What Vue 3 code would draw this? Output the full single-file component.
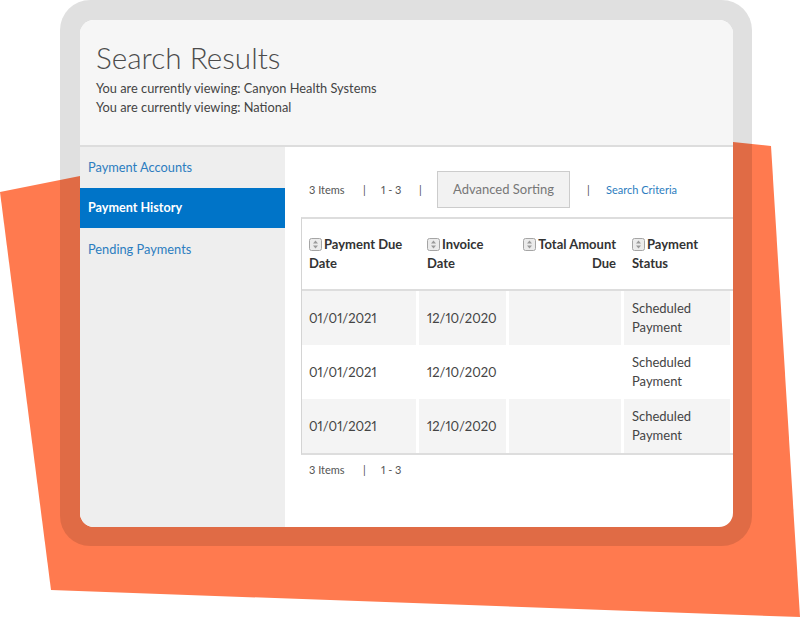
<script setup>
const nav = [
  { label: 'Payment Accounts', active: false },
  { label: 'Payment History', active: true },
  { label: 'Pending Payments', active: false },
]
const columns = [
  { first: 'Payment Due', second: 'Date', right: false },
  { first: 'Invoice', second: 'Date', right: false },
  { first: 'Total Amount', second: 'Due', right: true },
  { first: 'Payment', second: 'Status', right: false },
]
const rows = [1, 2, 3]
</script>

<template>
  <div class="page">
    <svg class="backdrop" width="800" height="617" viewBox="0 0 800 617" aria-hidden="true">
      <polygon points="0,192 80,176 733,142 771,146 800,617 51,590" fill="#ff7a4f" />
    </svg>
    <div class="frame">
      <div class="screen">
        <header class="head">
          <h1>Search Results</h1>
          <p>You are currently viewing: Canyon Health Systems</p>
          <p>You are currently viewing: National</p>
        </header>
        <div class="body">
          <nav class="side">
            <a v-for="item in nav" :key="item.label" :class="{ active: item.active }">{{ item.label }}</a>
          </nav>
          <main class="content">
            <div class="toolbar">
              <span class="count">3 Items</span>
              <span class="sep s1">|</span>
              <span class="range">1 - 3</span>
              <span class="sep s2">|</span>
              <button class="sort">Advanced Sorting</button>
              <span class="sep s3">|</span>
              <a class="criteria">Search Criteria</a>
            </div>
            <div class="table-wrap">
              <table>
                <colgroup>
                  <col class="c1" /><col class="c2" /><col class="c3" /><col class="c4" />
                </colgroup>
                <thead>
                  <tr>
                    <th v-for="c in columns" :key="c.first" :class="{ right: c.right }">
                      <span class="sorter">
                        <svg width="13" height="13" viewBox="0 0 13 13" aria-hidden="true">
                          <rect x=".5" y=".5" width="12" height="12" rx="2" fill="#ebebeb" stroke="#a5a5a5" />
                          <path d="M6.5 2.6 9 5.6H4zM6.5 10.4 4 7.4h5z" fill="#9a9a9a" />
                        </svg>
                      </span>{{ c.first }}<br />{{ c.second }}
                    </th>
                  </tr>
                </thead>
                <tbody>
                  <tr v-for="r in rows" :key="r">
                    <td class="date">01/01/2021</td>
                    <td class="date">12/10/2020</td>
                    <td></td>
                    <td class="status">Scheduled<br />Payment</td>
                  </tr>
                </tbody>
              </table>
            </div>
            <div class="toolbar bottom">
              <span class="count">3 Items</span>
              <span class="sep s1">|</span>
              <span class="range">1 - 3</span>
            </div>
          </main>
        </div>
      </div>
    </div>
  </div>
</template>

<style scoped>
.page {
  position: relative;
  width: 800px;
  height: 617px;
  overflow: hidden;
  background: #fff;
  font-family: Lato, "Open Sans", sans-serif;
  color: #444;
}
.backdrop {
  position: absolute;
  left: 0;
  top: 0;
}
.frame {
  position: relative;
  box-sizing: border-box;
  width: 692px;
  height: 546px;
  margin-left: 60px;
  padding: 20px 19px 19px 20px;
  border-radius: 30px;
  background: rgba(0, 0, 0, 0.12);
}
.screen {
  display: flex;
  flex-direction: column;
  height: 100%;
  overflow: hidden;
  border-radius: 14px;
  background: #fff;
}
.head {
  box-sizing: border-box;
  height: 127px;
  flex: none;
  padding: 19px 16px 0;
  background: #f6f6f6;
  border-bottom: 2px solid #ddd;
}
.head h1 {
  margin: 0 0 2px;
  font-size: 29.7px;
  line-height: 38px;
  font-weight: 300;
  color: #4c4c4c;
}
.head p {
  margin: 0;
  font-size: 12.8px;
  line-height: 18.5px;
  color: #444;
}
.body {
  display: flex;
  flex: 1;
  min-height: 0;
}
.side {
  display: flex;
  flex-direction: column;
  flex: none;
  width: 205px;
  background: #eee;
}
.side a {
  height: 41px;
  padding-left: 8px;
  font-size: 12.8px;
  line-height: 40px;
  color: #2c7dc0;
}
.side a.active {
  height: 40px;
  background: #0074c8;
  color: #fff;
  font-weight: 700;
  font-size: 12.6px;
}
.side a.active + a {
  padding-top: 1px;
}
.content {
  flex: 1;
  min-width: 0;
  padding-left: 16px;
}
.toolbar {
  display: flex;
  align-items: center;
  height: 38px;
  margin-top: 23px;
  padding-left: 8px;
  font-size: 11px;
  font-variant-numeric: proportional-nums;
  color: #555;
}
.count {
  width: 54px;
}
.range {
  width: 38px;
}
.sep {
  color: #555;
}
.s1,
.s2 {
  width: 18px;
}
.s3 {
  width: 19px;
  margin-left: 17px;
}
.sort {
  box-sizing: border-box;
  width: 133px;
  height: 37px;
  padding: 0;
  border: 1px solid #ccc;
  background: #f2f2f2;
  font: inherit;
  font-size: 13px;
  color: #777;
}
.criteria {
  color: #2c7dc0;
}
.table-wrap {
  width: 431px;
  margin-top: 9px;
  border-top: 2px solid #ddd;
  border-left: 1px solid #d4d4d4;
  border-bottom: 2px solid #ddd;
}
table {
  table-layout: fixed;
  width: 431px;
  border-collapse: separate;
  border-spacing: 0;
  font-size: 13px;
}
.c1 { width: 117px; }
.c2 { width: 90px; }
.c3 { width: 115px; }
.c4 { width: 109px; }
th {
  box-sizing: border-box;
  height: 72px;
  padding: 0 8px;
  border-bottom: 2px solid #ddd;
  text-align: left;
  font-weight: 700;
  line-height: 19px;
  color: #333;
}
th.right {
  text-align: right;
}
th:first-child,
td:first-child {
  padding-left: 7px;
}
.sorter {
  display: inline-block;
  width: 15px;
  height: 13px;
  vertical-align: -2px;
}
.sorter svg {
  display: block;
}
td {
  box-sizing: border-box;
  height: 54px;
  padding: 0 4px 0 8px;
  border-right: 3px solid #fff;
  line-height: 19px;
  color: #444;
}
.date {
  font-variant-numeric: proportional-nums;
}
tbody tr:nth-child(odd) td {
  background: #f4f4f4;
}
.bottom {
  margin-top: 0;
  height: 28px;
}
</style>
